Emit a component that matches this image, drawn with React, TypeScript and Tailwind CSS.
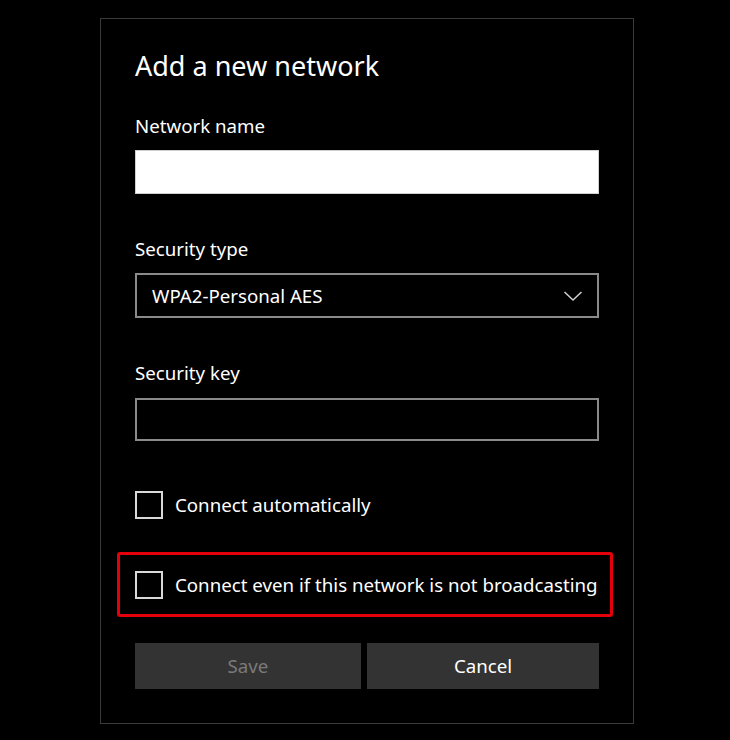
import React from 'react';

const font = { fontFamily: '"Segoe UI", "Noto Sans", "Open Sans", sans-serif' };

const Checkbox: React.FC<{ label: string }> = ({ label }) => (
    <label className="flex items-center gap-[12px] cursor-pointer">
        <span className="w-[28px] h-[28px] border-2 border-[#d9d9d9] shrink-0" />
        <span className="text-[18.7px] leading-[24px] text-white whitespace-nowrap">{label}</span>
    </label>
);

export default function App() {
    return (
        <div className="w-[730px] h-[740px] bg-black overflow-hidden" style={font}>
            <div className="ml-[100px] mt-[18px] w-[534px] h-[706px] border border-[#3a3a3a] bg-black pl-[34px] pt-[30px]">
                <h1 className="text-[27px] leading-[34px] text-white">Add a new network</h1>

                <div className="mt-[31px] text-[18.7px] leading-[24px] text-white">Network name</div>
                <div className="mt-[12px] w-[464px] h-[44px] bg-white border border-[#cfcfcf]" />

                <div className="mt-[43px] text-[18.7px] leading-[24px] text-white">Security type</div>
                <div className="mt-[12px] w-[464px] h-[45px] border-2 border-[#8a8a8a] flex items-center justify-between pl-[15px] pr-[14px]">
                    <span className="text-[18.7px] leading-[24px] text-white">WPA2-Personal AES</span>
                    <svg width="20" height="12" viewBox="0 0 20 12" fill="none">
                        <polyline points="1.5,2 10,10 18.5,2" stroke="#d0d0d0" strokeWidth="1.5" />
                    </svg>
                </div>

                <div className="mt-[43px] text-[18.7px] leading-[24px] text-white">Security key</div>
                <div className="mt-[13px] w-[464px] h-[43px] border-2 border-[#8a8a8a]" />

                <div className="mt-[50px]">
                    <Checkbox label="Connect automatically" />
                </div>

                <div className="mt-[33px] -ml-[18px] w-[496px] h-[65px] border-[3px] border-[#e3000b] rounded-[3px] flex items-center pl-[15px]">
                    <Checkbox label="Connect even if this network is not broadcasting" />
                </div>

                <div className="mt-[26px] flex gap-[6px]">
                    <button className="w-[226px] h-[46px] bg-[#333333] text-[18.7px] text-[#7a7a7a]">Save</button>
                    <button className="w-[232px] h-[46px] bg-[#333333] text-[18.7px] text-white">Cancel</button>
                </div>
            </div>
        </div>
    );
}
